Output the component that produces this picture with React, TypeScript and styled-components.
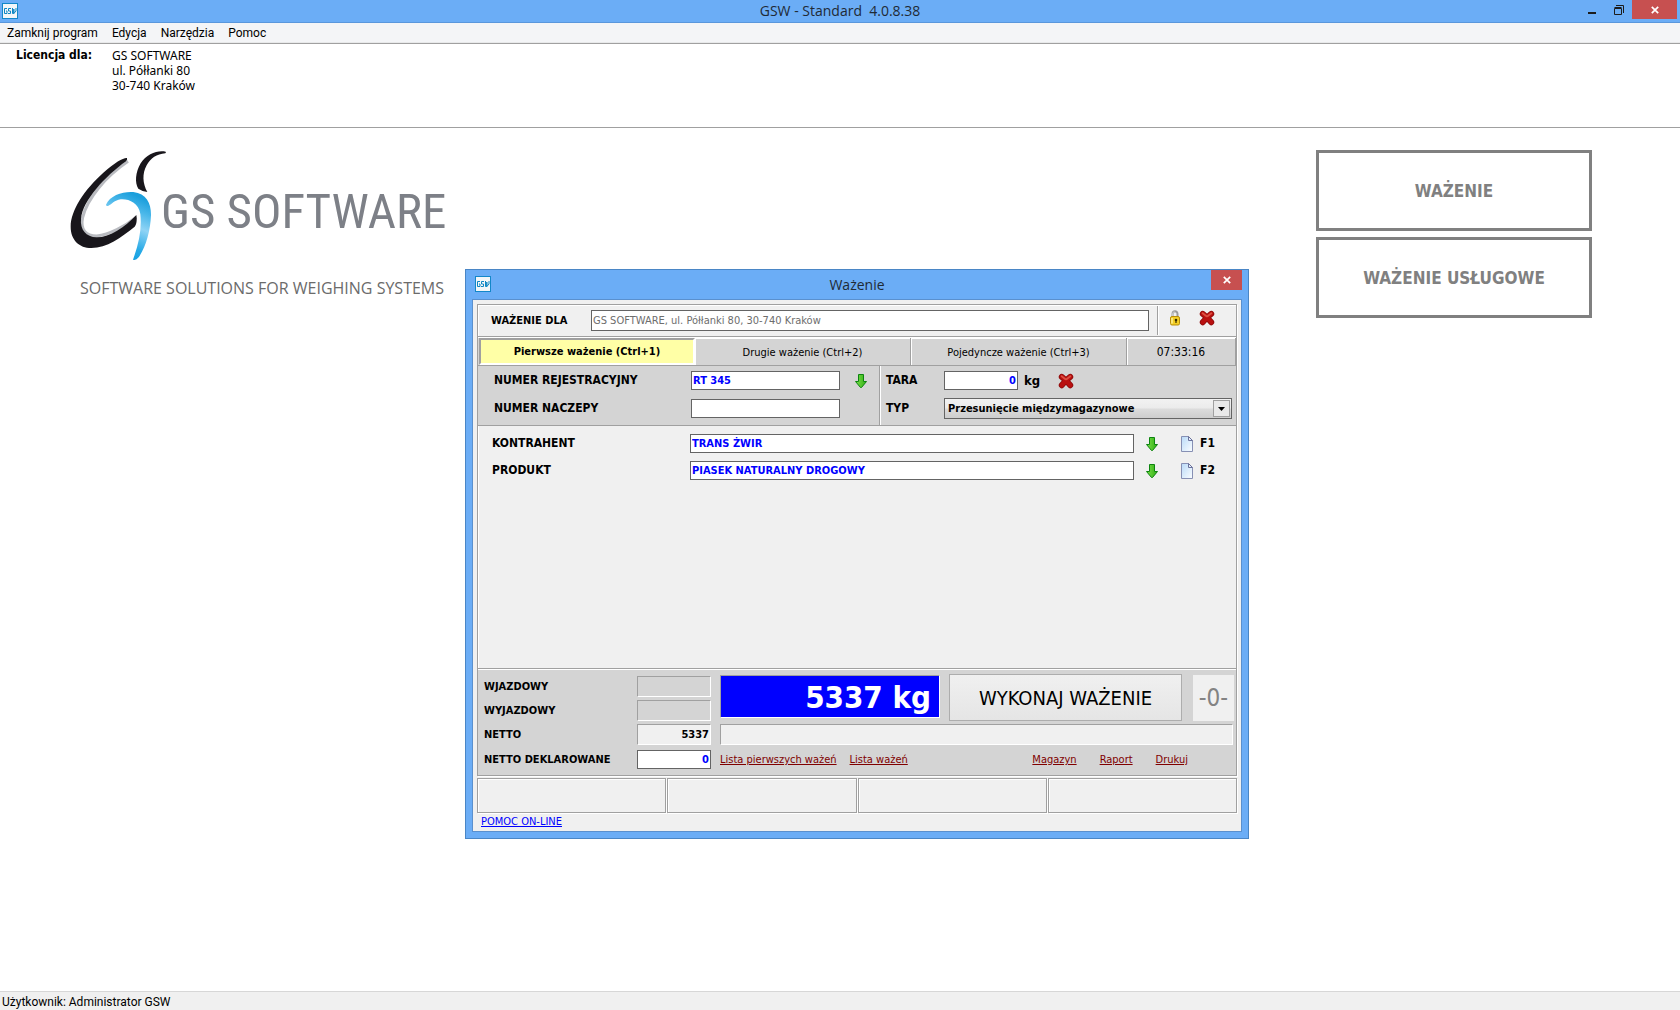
import React, { useState } from "react";
import styled, { createGlobalStyle, css } from "styled-components";

const ui = `"DejaVu Sans Condensed", "DejaVu Sans", sans-serif`;
const system = `"Open Sans", "Noto Sans", sans-serif`;
const line = "#a0a0a0";
const panel = "#d4d4d4";
const face = "#f0f0f0";
const sky = "#6badf6";

const Global = createGlobalStyle`
  *, *::before, *::after { box-sizing: border-box; }
  body { margin: 0; background: #fff; font: 11px/14px ${ui}; color: #000; }
  button, input, select { margin: 0; padding: 0; border: 0; border-radius: 0; font: inherit; color: inherit; }
  button { background: none; }
  svg { display: block; flex: none; }
  input:focus, button:focus { outline: none; }
`;

const Screen = styled.div`
  position: relative;
  min-height: 100vh;
  display: flex;
  flex-direction: column;
`;

/* Main window chrome */

const TitleBar = styled.header`
  display: grid;
  grid-template-columns: 1fr auto 1fr;
  height: 23px;
  background: ${sky};
  border-bottom: 1px solid #5a97dc;
`;

const TitleIcon = styled.span`
  align-self: center;
  height: 16px;
  padding-left: 2px;
`;

const Title = styled.h1`
  margin: 0;
  font: 400 14px/22px ${system};
  color: #1f2a35;
  white-space: pre;
`;

const WindowButtons = styled.div<{ $inset?: number }>`
  display: flex;
  justify-content: flex-end;
  align-items: flex-start;
  padding-right: ${(p) => p.$inset ?? 0}px;
`;

const WindowButton = styled.button<{ $close?: boolean; $wide?: boolean }>`
  display: flex;
  align-items: center;
  justify-content: center;
  width: ${(p) => (p.$close ? (p.$wide ? 45 : 31) : 27)}px;
  height: ${(p) => (p.$close && !p.$wide ? 20 : 19)}px;
  background: ${(p) => (p.$close ? "#c75050" : "transparent")};
`;

const MenuBar = styled.nav`
  display: flex;
  gap: 14px;
  height: 20px;
  padding: 0 7px;
  background: #f4f5f7;
  border-bottom: 1px solid #e8e9ea;
`;

const MenuItem = styled.button`
  font: 12px/20px Roboto, ${system};
`;

const License = styled.section`
  display: flex;
  height: 85px;
  padding: 4px 16px;
  border-top: 1px solid ${line};
  border-bottom: 1px solid ${line};
  font: 12px/15px ${ui};
`;

const LicenseLabel = styled.strong`
  width: 96px;
`;

const Address = styled.address`
  font: 12px/15px "Noto Sans", sans-serif;
`;

const Workspace = styled.main`
  flex: 1;
  display: flex;
  justify-content: space-between;
  align-items: flex-start;
  padding: 22px 88px 22px 70px;
`;

const Wordmark = styled.div`
  display: flex;
  align-items: center;
`;

const BrandName = styled.span`
  margin-left: -6px;
  padding-top: 12px;
  font: 400 49px/64px "Roboto Condensed", "Open Sans Condensed", sans-serif;
  color: #7d8087;
  white-space: nowrap;
`;

const Tagline = styled.p`
  margin: 15px 0 0 10px;
  font: 16px/22px ${system};
  color: #6b6b6b;
`;

const Launchers = styled.div`
  display: flex;
  flex-direction: column;
  gap: 6px;
  width: 276px;
`;

const Launcher = styled.button`
  height: 81px;
  border: 3px solid #808080;
  background: #fff;
  color: #808080;
  font: 700 17px/22px ${ui};
`;

const StatusBar = styled.footer`
  height: 19px;
  padding: 0 2px;
  background: ${face};
  border-top: 1px solid #d7d7d7;
  font: 12px/20px Roboto, ${system};
`;

/* Weighing dialog */

const Dialog = styled.section`
  position: absolute;
  left: 465px;
  top: 269px;
  width: 784px;
  padding: 0 6px 6px;
  background: ${sky};
  border: 1px solid #4a86c6;
`;

const DialogTitle = styled.header`
  display: grid;
  grid-template-columns: 1fr auto 1fr;
  height: 29px;
`;

const DialogIcon = styled.span`
  padding: 6px 3px;
`;

const DialogHeading = styled.h2`
  margin: 0;
  font: 400 14px/30px ${system};
  color: #1f2a35;
`;

const Client = styled.div`
  padding: 4px 4px 0;
  background: ${face};
  border: 1px solid #5a90ce;
`;

const etched = css`
  border: 1px solid ${line};
  box-shadow: 1px 1px 0 #fff, inset 1px 1px 0 #fff;
`;

const sunken = css`
  border: 1px solid;
  border-color: ${line} #fff #fff ${line};
`;

const Frame = styled.div`
  ${etched}
`;

const OwnerRow = styled.div`
  display: flex;
  align-items: center;
  height: 32px;
  padding-left: 13px;
  border-bottom: 1px solid ${line};
`;

const Label = styled.label<{ $width?: number; $large?: boolean }>`
  width: ${(p) => (p.$width ? `${p.$width}px` : "auto")};
  flex: none;
  font-weight: 700;
  ${(p) => p.$large && css`font-size: 12px; line-height: 19px;`}
`;

const TextBox = styled.input<{ $width?: number; $right?: boolean; $tall?: boolean; $muted?: boolean }>`
  ${(p) => (p.$width ? `width: ${p.$width}px;` : "flex: 1; min-width: 0;")}
  height: ${(p) => (p.$tall ? 21 : 19)}px;
  padding: 0 1px;
  border: 1px solid #646464;
  background: #fff;
  color: ${(p) => (p.$muted ? "#6d6d6d" : "#0000ff")};
  font-weight: ${(p) => (p.$muted ? 400 : 700)};
  text-align: ${(p) => (p.$right ? "right" : "left")};
`;

const OwnerTools = styled.div`
  display: flex;
  align-items: flex-start;
  gap: 16px;
  width: 79px;
  height: 29px;
  margin-left: 8px;
  padding: 4px 0 0 9px;
  border-left: 1px solid ${line};
  box-shadow: inset 1px 0 0 #fff;
`;

const IconButton = styled.button`
  width: 16px;
  height: 16px;
`;

const Tabs = styled.div`
  display: flex;
  height: 29px;
  padding: 1px 0 0 1px;
  background: ${panel};
  border-bottom: 1px solid ${line};
  box-shadow: inset 0 1px 0 #fff;
`;

const Tab = styled.button<{ $active: boolean }>`
  width: 216px;
  flex: none;
  padding-top: 2px;
  background: ${panel};
  border-right: 1px solid ${line};
  box-shadow: inset 1px 1px 0 #fff;
  ${(p) =>
    p.$active &&
    css`
      background: #ffffa6;
      font-weight: 700;
      padding-top: 1px;
      border: 2px solid;
      border-color: ${line} #fff #fff ${line};
      box-shadow: none;
    `}
`;

const Clock = styled.time`
  flex: 1;
  text-align: center;
  font-size: 12px;
  line-height: 28px;
  border-right: 1px solid ${line};
  box-shadow: inset 1px 1px 0 #fff;
`;

const Vehicle = styled.div`
  display: flex;
  background: ${panel};
  border-bottom: 1px solid ${line};
`;

const VehicleColumn = styled.div<{ $side?: boolean }>`
  display: flex;
  flex-direction: column;
  gap: ${(p) => (p.$side ? 8 : 9)}px;
  ${(p) =>
    p.$side
      ? css`
          flex: 1;
          padding: 5px 4px 6px 6px;
          border-left: 1px solid ${line};
          box-shadow: inset 1px 0 0 #fff;
        `
      : css`
          width: 401px;
          padding: 5px 0 7px 16px;
        `}
`;

const FieldRow = styled.div`
  display: flex;
  align-items: center;
`;

const AfterField = styled.span`
  display: flex;
  margin-left: 13px;
`;

const Unit = styled.span`
  width: 40px;
  padding-left: 6px;
  font: 700 13px/19px ${ui};
`;

const SelectBox = styled.span`
  flex: 1;
  display: grid;
  border: 1px solid #646464;
  height: 21px;
  background: linear-gradient(#f2f2f2, #ebebeb 48%, #dcdcdc 52%, #cdcdcd);

  & > * { grid-area: 1 / 1; }
`;

const Select = styled.select`
  appearance: none;
  background: transparent;
  padding: 0 24px 0 3px;
  font-weight: 700;
  outline: none;
`;

const SelectArrow = styled.span`
  justify-self: end;
  display: grid;
  place-items: center;
  width: 17px;
  margin: 1px;
  border: 1px solid ${line};
  background: #e9e9e9;
  pointer-events: none;
`;

const Parties = styled.div`
  display: grid;
  align-content: start;
  gap: 8px;
  min-height: 242px;
  padding: 8px 0 8px 14px;
`;

const PartyRow = styled.div`
  display: grid;
  grid-template-columns: 198px 1fr 44px 58px;
  align-items: center;

  & > button:nth-of-type(1) { margin-left: 10px; }
`;

const CardButton = styled.button`
  display: flex;
  align-items: center;
  gap: 5px;
  padding-left: 1px;
  font: 700 12px/19px ${ui};
`;

const Summary = styled.div`
  display: flex;
  gap: 9px;
  padding: 4px 0 6px 6px;
  background: ${panel};
  border-top: 1px solid ${line};
  box-shadow: inset 0 1px 0 #fff;
`;

const Readings = styled.div`
  display: flex;
  flex-direction: column;
  gap: 3px;
  padding-top: 3px;
`;

const Reading = styled.output<{ $filled?: boolean }>`
  ${sunken}
  width: 74px;
  height: 21px;
  padding-right: 1px;
  background: ${(p) => (p.$filled ? face : panel)};
  font-weight: 700;
  line-height: 20px;
  text-align: right;
`;

const Declared = styled(FieldRow)`
  padding-top: 2px;
`;

const Actions = styled.div`
  flex: 1;
  display: flex;
  flex-direction: column;
  gap: 3px;
  padding-top: 1px;
`;

const ActionRow = styled.div`
  display: flex;
  align-items: flex-start;
  height: 47px;
`;

const Scale = styled.output`
  ${sunken}
  width: 220px;
  height: 43px;
  margin-top: 1px;
  padding-right: 8px;
  background: #0000ff;
  color: #fff;
  font: 700 31px/42px ${ui};
  text-align: right;
`;

const Perform = styled.button`
  flex: 1;
  height: 47px;
  margin: 0 11px 0 9px;
  border: 1px solid #adadad;
  background: linear-gradient(#f0f0f0, #e5e5e5);
  font-size: 20px;
`;

const Zero = styled.button`
  width: 41px;
  height: 46px;
  margin: 1px 2px 0 0;
  background: ${face};
  color: #838383;
  font-size: 24px;
`;

const Message = styled.div`
  ${sunken}
  height: 21px;
  margin-right: 3px;
  background: ${face};
`;

const Links = styled.nav`
  display: flex;
  justify-content: space-between;
  padding: 5px 48px 0 0;
`;

const LinkGroup = styled.span<{ $gap: number }>`
  display: flex;
  gap: ${(p) => p.$gap}px;
`;

const Link = styled.a<{ $help?: boolean }>`
  color: ${(p) => (p.$help ? "#0000ff" : "#800000")};
  text-decoration: underline;
`;

const Slots = styled.div`
  display: grid;
  grid-template-columns: repeat(4, 1fr);
  gap: 1px;
  margin-top: 2px;
`;

const Slot = styled.div`
  ${etched}
  height: 35px;
`;

const Help = styled.div`
  height: 18px;
  padding: 2px 4px;
`;

const AppIcon = () => (
  <svg width="16" height="16" viewBox="0 0 16 16" aria-hidden="true">
    <rect x=".5" y=".5" width="15" height="15" fill="#f3f6f8" stroke="#1387c9" />
    <g fill="none" stroke="#0d86c4" strokeWidth="1">
      <path d="M5 5.500H2.500v5H5V8H4" />
      <path d="M9 5.500H6.500V8H8.500v2.500H6" />
      <path d="M10.500 5v5.500h1.300V6v4.500L14 8V5" />
    </g>
  </svg>
);

const CloseGlyph = () => (
  <svg width="8" height="8" viewBox="0 0 8 8" aria-hidden="true">
    <path d="M.8.8l6.400 6.400M7.200.8L.8 7.200" stroke="#fff" strokeWidth="1.700" />
  </svg>
);

const DownArrow = () => (
  <svg width="16" height="16" viewBox="0 0 16 16" aria-hidden="true">
    <defs>
      <linearGradient id="leaf" x1="0" y1="0" x2="1" y2="0">
        <stop offset="0" stopColor="#7be04a" />
        <stop offset="1" stopColor="#2fae12" />
      </linearGradient>
    </defs>
    <path d="M5.500 1.500h5v7h3L8.500 14.500h-1L2.500 8.500h3z" fill="url(#leaf)" stroke="#0c8410" strokeLinejoin="round" />
  </svg>
);

const RedCross = () => (
  <svg width="16" height="16" viewBox="0 0 16 16" aria-hidden="true">
    <g fill="none" strokeLinecap="round">
      <path d="M3.800 3.800Q8 7 12.200 12.200M12.200 3.800Q8 7 3.800 12.200" stroke="#8e0b0b" strokeWidth="6" />
      <path d="M3.800 3.800Q8 7 12.200 12.200M12.200 3.800Q8 7 3.800 12.200" stroke="#b91010" strokeWidth="4.400" />
      <path d="M3.600 3.300L7.500 6.300M12.400 3.300L8.500 6.300" stroke="#dd4f42" strokeWidth="1.800" />
    </g>
  </svg>
);

const Padlock = () => (
  <svg width="16" height="16" viewBox="0 0 16 16" aria-hidden="true">
    <path d="M5.500 7V4a2.500 2.800 0 0 1 5 0v3" fill="none" stroke="#9b9b9b" strokeWidth="2" />
    <path d="M5.500 6V4a2.500 2.800 0 0 1 2-2.400" fill="none" stroke="#d5d5d5" strokeWidth=".8" />
    <rect x="3.500" y="6.500" width="9" height="8.500" rx="1.500" fill="#f4cf25" stroke="#b98d0a" />
    <path d="M5 8v5.500" stroke="#fff3a0" strokeWidth="1.400" />
    <circle cx="9" cy="10" r="1.300" fill="#3a2c00" />
    <path d="M9 10v3" stroke="#3a2c00" strokeWidth="1.200" />
  </svg>
);

const Sheet = () => (
  <svg width="16" height="16" viewBox="0 0 16 16" aria-hidden="true">
    <defs>
      <linearGradient id="sheet" x1="0" y1="0" x2="1" y2="1">
        <stop offset="0" stopColor="#b9daf8" />
        <stop offset="1" stopColor="#fbfdff" />
      </linearGradient>
    </defs>
    <path d="M2.500.5h7l4 4v11h-11z" fill="url(#sheet)" stroke="#8790b4" />
    <path d="M9.500.5v4h4z" fill="#e9eefa" stroke="#6a729c" />
  </svg>
);

const BrandMark = () => (
  <svg width="97" height="112" viewBox="60 60 291 336" aria-hidden="true">
    <defs>
      <linearGradient id="drop" x1="0.200" y1="1" x2="0.500" y2="0">
        <stop offset="0" stopColor="#0c9be0" />
        <stop offset=".28" stopColor="#27aae6" />
        <stop offset=".58" stopColor="#8fd3f5" />
        <stop offset=".8" stopColor="#4bb8ea" />
        <stop offset="1" stopColor="#1b9fdc" />
      </linearGradient>
    </defs>
    <path d="M234 94C166 140 112 205 98 262C90 300 108 318 140 318C178 314 224 290 258 262" fill="none" stroke="#b9bbc0" strokeWidth="9" />
    <path d="M231 84C222 82 196 96 160 128C104 178 62 240 62 290C62 330 88 354 124 354C170 354 214 322 254 290C261 282 261 266 259 255C224 292 180 322 140 322C108 320 90 300 93 266C98 212 166 138 228 94Q233 88 231 84Z" fill="#18161b" />
    <path d="M347 65C322 60 290 72 272 100C256 128 254 158 265 176Q276 184 292 186C278 160 276 132 290 106C302 84 320 72 346 70Q349 67 347 65Z" fill="#18161b" />
    <path d="M168 224C180 196 218 184 250 186C290 190 304 222 303 256C301 304 288 350 266 382Q258 392 249 389C266 342 276 298 271 252C266 218 236 206 212 208C194 210 184 224 174 228Q168 229 168 224Z" fill="url(#drop)" />
  </svg>
);

const tabs = ["Pierwsze ważenie (Ctrl+1)", "Drugie ważenie (Ctrl+2)", "Pojedyncze ważenie (Ctrl+3)"];

const parties = [
  { id: "contractor", label: "KONTRAHENT", value: "TRANS ŻWIR", key: "F1" },
  { id: "product", label: "PRODUKT", value: "PIASEK NATURALNY DROGOWY", key: "F2" },
];

const readings = [
  { id: "entry", label: "WJAZDOWY", value: "" },
  { id: "exit", label: "WYJAZDOWY", value: "" },
  { id: "net", label: "NETTO", value: "5337" },
];

function WeighingDialog() {
  const [active, setActive] = useState(0);
  return (
    <Dialog role="dialog" aria-labelledby="dialog-title">
      <DialogTitle>
        <DialogIcon><AppIcon /></DialogIcon>
        <DialogHeading id="dialog-title">Ważenie</DialogHeading>
        <WindowButtons>
          <WindowButton $close aria-label="Zamknij"><CloseGlyph /></WindowButton>
        </WindowButtons>
      </DialogTitle>
      <Client>
        <Frame>
          <OwnerRow>
            <Label htmlFor="owner" $width={100}>WAŻENIE DLA</Label>
            <TextBox id="owner" $tall $muted defaultValue="GS SOFTWARE, ul. Półłanki 80, 30-740 Kraków" />
            <OwnerTools>
              <IconButton aria-label="Zablokuj"><Padlock /></IconButton>
              <IconButton aria-label="Wyczyść"><RedCross /></IconButton>
            </OwnerTools>
          </OwnerRow>
          <Tabs>
            {tabs.map((name, i) => (
              <Tab key={name} $active={i === active} onClick={() => setActive(i)}>{name}</Tab>
            ))}
            <Clock>07:33:16</Clock>
          </Tabs>
          <Vehicle>
            <VehicleColumn>
              <FieldRow>
                <Label $large $width={197} htmlFor="plate">NUMER REJESTRACYJNY</Label>
                <TextBox id="plate" $width={149} defaultValue="RT 345" />
                <AfterField><IconButton aria-label="Wybierz pojazd"><DownArrow /></IconButton></AfterField>
              </FieldRow>
              <FieldRow>
                <Label $large $width={197} htmlFor="trailer">NUMER NACZEPY</Label>
                <TextBox id="trailer" $width={149} />
              </FieldRow>
            </VehicleColumn>
            <VehicleColumn $side>
              <FieldRow>
                <Label $large $width={58} htmlFor="tare">TARA</Label>
                <TextBox id="tare" $width={74} $right defaultValue="0" />
                <Unit>kg</Unit>
                <IconButton aria-label="Usuń tarę"><RedCross /></IconButton>
              </FieldRow>
              <FieldRow>
                <Label $large $width={58} htmlFor="kind">TYP</Label>
                <SelectBox>
                  <Select id="kind"><option>Przesunięcie międzymagazynowe</option></Select>
                  <SelectArrow>
                    <svg width="7" height="4" viewBox="0 0 7 4" aria-hidden="true"><path d="M0 0h7L3.500 4z" /></svg>
                  </SelectArrow>
                </SelectBox>
              </FieldRow>
            </VehicleColumn>
          </Vehicle>
          <Parties>
            {parties.map((p) => (
              <PartyRow key={p.id}>
                <Label $large htmlFor={p.id}>{p.label}</Label>
                <TextBox id={p.id} defaultValue={p.value} />
                <IconButton aria-label="Wybierz z listy"><DownArrow /></IconButton>
                <CardButton><Sheet />{p.key}</CardButton>
              </PartyRow>
            ))}
          </Parties>
          <Summary>
            <Readings>
              {readings.map((r) => (
                <FieldRow key={r.id}>
                  <Label $width={153} htmlFor={r.id}>{r.label}</Label>
                  <Reading id={r.id} $filled={r.value !== ""}>{r.value}</Reading>
                </FieldRow>
              ))}
              <Declared>
                <Label $width={153} htmlFor="declared">NETTO DEKLAROWANE</Label>
                <TextBox id="declared" $width={74} $right defaultValue="0" />
              </Declared>
            </Readings>
            <Actions>
              <ActionRow>
                <Scale>5337 kg</Scale>
                <Perform>WYKONAJ WAŻENIE</Perform>
                <Zero>-0-</Zero>
              </ActionRow>
              <Message />
              <Links>
                <LinkGroup $gap={13}>
                  <Link href="#first">Lista pierwszych ważeń</Link>
                  <Link href="#all">Lista ważeń</Link>
                </LinkGroup>
                <LinkGroup $gap={23}>
                  <Link href="#stock">Magazyn</Link>
                  <Link href="#report">Raport</Link>
                  <Link href="#print">Drukuj</Link>
                </LinkGroup>
              </Links>
            </Actions>
          </Summary>
        </Frame>
        <Slots><Slot /><Slot /><Slot /><Slot /></Slots>
        <Help><Link $help href="#help">POMOC ON-LINE</Link></Help>
      </Client>
    </Dialog>
  );
}

export default function App() {
  return (
    <Screen>
      <Global />
      <TitleBar>
        <TitleIcon><AppIcon /></TitleIcon>
        <Title>{"GSW - Standard  4.0.8.38"}</Title>
        <WindowButtons $inset={3}>
          <WindowButton aria-label="Minimalizuj">
            <svg width="8" height="10" viewBox="0 0 8 10" aria-hidden="true"><path d="M0 7h8v2H0z" fill="#1c1c1c" /></svg>
          </WindowButton>
          <WindowButton aria-label="Przywróć">
            <svg width="10" height="10" viewBox="0 0 10 10" aria-hidden="true">
              <path d="M.5 3.500h7v6h-7zM.5 2.500h7M2 .5h7.500V8" fill="none" stroke="#1c1c1c" />
            </svg>
          </WindowButton>
          <WindowButton $close $wide aria-label="Zamknij"><CloseGlyph /></WindowButton>
        </WindowButtons>
      </TitleBar>
      <MenuBar>
        {["Zamknij program", "Edycja", "Narzędzia", "Pomoc"].map((m) => <MenuItem key={m}>{m}</MenuItem>)}
      </MenuBar>
      <License>
        <LicenseLabel>Licencja dla:</LicenseLabel>
        <Address>GS SOFTWARE<br />ul. Półłanki 80<br />30-740 Kraków</Address>
      </License>
      <Workspace>
        <div>
          <Wordmark><BrandMark /><BrandName>GS SOFTWARE</BrandName></Wordmark>
          <Tagline>SOFTWARE SOLUTIONS FOR WEIGHING SYSTEMS</Tagline>
        </div>
        <Launchers>
          <Launcher>WAŻENIE</Launcher>
          <Launcher>WAŻENIE USŁUGOWE</Launcher>
        </Launchers>
      </Workspace>
      <StatusBar>Użytkownik: Administrator GSW</StatusBar>
      <WeighingDialog />
    </Screen>
  );
}
